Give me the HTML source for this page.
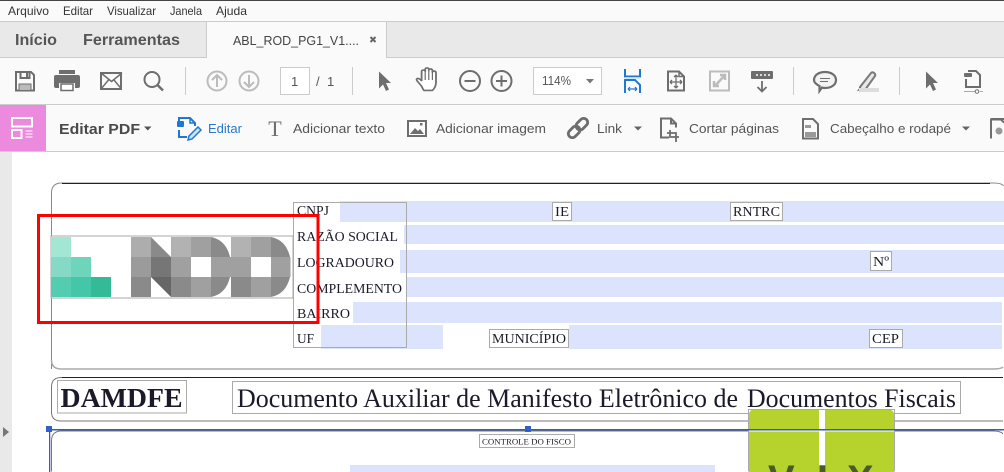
<!DOCTYPE html>
<html><head><meta charset="utf-8"><style>
html,body{margin:0;padding:0;background:#fff;width:1004px;height:472px;overflow:hidden}
body{position:relative}
svg{display:block}
.u{font-family:"Liberation Sans",sans-serif;fill:#555}
.s{font-family:"Liberation Serif",serif;fill:#1a1a2a;font-size:14px}
.i{fill:none;stroke:#6e6e6e;stroke-width:2}
#gl{position:absolute;left:749px;top:465px;width:145px;height:7px;overflow:hidden;font:bold 40px/40px "Liberation Sans",sans-serif;color:#4a5a28}
#gl span{position:absolute;top:-5px;height:12px;width:30px;overflow:hidden;display:block}
</style></head><body>
<svg width="1004" height="472" viewBox="0 0 1004 472" xmlns="http://www.w3.org/2000/svg">
<rect width="1004" height="472" fill="#fff"/>
<!-- chrome -->
<rect width="1004" height="152" fill="#fafafa"/>
<rect width="1004" height="1" fill="#444"/>
<rect y="21" width="1004" height="1" fill="#ccc"/>
<rect y="22" width="1004" height="35" fill="#e9e9e9"/>
<rect y="57" width="1004" height="1" fill="#ccc"/>
<rect x="207" y="22" width="179" height="36" fill="#fafafa"/>
<rect x="206" y="22" width="1" height="36" fill="#ccc"/>
<rect x="386" y="22" width="1" height="36" fill="#ccc"/>
<rect y="104" width="1004" height="1" fill="#ccc"/>
<rect y="151" width="1004" height="1" fill="#ccc"/>
<rect y="105" width="46" height="46" fill="#ec8bdd"/>
<!-- menu -->
<g class="u" font-size="12" style="fill:#333">
<text x="8" y="15" textLength="41" lengthAdjust="spacingAndGlyphs">Arquivo</text>
<text x="63" y="15" textLength="30" lengthAdjust="spacingAndGlyphs">Editar</text>
<text x="107" y="15" textLength="49" lengthAdjust="spacingAndGlyphs">Visualizar</text>
<text x="170" y="15" textLength="32" lengthAdjust="spacingAndGlyphs">Janela</text>
<text x="216" y="15" textLength="31" lengthAdjust="spacingAndGlyphs">Ajuda</text>
</g>
<g class="u" font-size="15.500" font-weight="bold">
<text x="15" y="45" textLength="42" lengthAdjust="spacingAndGlyphs">Início</text>
<text x="83" y="45" textLength="97" lengthAdjust="spacingAndGlyphs">Ferramentas</text>
</g>
<text class="u" x="233" y="45" font-size="13" style="fill:#444" textLength="126" lengthAdjust="spacingAndGlyphs">ABL_ROD_PG1_V1....</text>
<path d="M370.500 37l5 5m0-5l-5 5" stroke="#666" stroke-width="2" fill="none"/>
<!-- toolbar left -->
<path class="i" d="M16 72h15l3 3v15.500h-18zM20.500 72v6h9v-6"/>
<rect x="26" y="73" width="2" height="4" fill="#6e6e6e"/>
<rect x="19" y="84" width="12" height="6.500" fill="#bbb" stroke="#6e6e6e" stroke-width="1"/>
<path d="M59 70h16v4h-16zM56 75h22a2 2 0 0 1 2 2v9a2 2 0 0 1-2 2h-3v-5h-16v5h-3a2 2 0 0 1-2-2v-9a2 2 0 0 1 2-2z" fill="#6e6e6e"/>
<rect x="61" y="84" width="12" height="6.500" fill="#fff" stroke="#6e6e6e" stroke-width="1.500"/>
<rect x="101" y="73" width="20" height="16" class="i"/>
<path d="M101 73l10.500 8.500 10.500-8.500M101 89l7.500-9M121.500 89l-7.500-9" fill="none" stroke="#6e6e6e" stroke-width="1.500"/>
<circle cx="152" cy="79.500" r="7.500" class="i"/>
<path d="M157.500 85l5.500 5.500" stroke="#6e6e6e" stroke-width="2.500" fill="none"/>
<rect x="185" y="67" width="1" height="28" fill="#ccc"/>
<g fill="none" stroke="#bcbcbc" stroke-width="2">
<circle cx="217" cy="81" r="9.500"/><path d="M217 87v-11.500M212 80l5-5 5 5"/>
<circle cx="249" cy="81" r="9.500"/><path d="M249 75v11.500M244 82l5 5 5-5"/>
</g>
<rect x="280.500" y="67.500" width="29" height="27" fill="#fff" stroke="#ccc"/>
<text class="u" x="291" y="86" font-size="13" style="fill:#555">1</text>
<text class="u" x="316" y="86" font-size="13" style="fill:#555">/</text>
<text class="u" x="327" y="86" font-size="13" style="fill:#555">1</text>
<rect x="352" y="67" width="1" height="28" fill="#ccc"/>
<path d="M379 71.500l12 11.500h-5l3 6.500-3 1.500-3-6.500-4 4z" fill="#6e6e6e"/>
<!-- hand -->
<g transform="translate(427 81) scale(1.2 1.05) translate(-425.500 -81)">
<path d="M421 86c-2-3-5-6-4-7 1-1 3 0 4 2v-9c0-2 3-2 3 0v-2c0-2 3-2 3 0v1c0-2 3-2 3 0v2c0-2 3-2 3 0v9c0 4-1 6-3 8h-7c-1-1-1-2-2-4z" fill="#fff" stroke="#6e6e6e" stroke-width="1.500"/>
<path d="M424 72v8M427 71v9M430 72v8" stroke="#6e6e6e" stroke-width="1" fill="none"/>
</g>
<circle cx="470" cy="81" r="10" class="i"/><path d="M464.500 81h11" stroke="#6e6e6e" stroke-width="2"/>
<circle cx="501.500" cy="81" r="10" class="i"/><path d="M496 81h11M501.500 75.500v11" stroke="#6e6e6e" stroke-width="2"/>
<rect x="533.500" y="67.500" width="68" height="27" fill="#fff" stroke="#ccc"/>
<text class="u" x="542" y="85" font-size="12.500" style="fill:#555" textLength="29" lengthAdjust="spacingAndGlyphs">114%</text>
<path d="M586 79h8l-4 4.500z" fill="#777"/>
<!-- fit width blue -->
<path d="M625 69v7.500h15v-7.500" fill="none" stroke="#1f78d1" stroke-width="2"/>
<rect x="625" y="77" width="15" height="1.500" fill="#b7d4f0"/>
<path d="M625 93v-13h10l5 5v8" fill="none" stroke="#1f78d1" stroke-width="2"/>
<path d="M628 89h9M628 89l2-2m-2 2l2 2M637 89l-2-2m2 2l-2 2" stroke="#1f78d1" stroke-width="1.200" fill="none"/>
<path class="i" d="M668 71.500h11l5 5v14h-16z"/><path d="M679 71.500v5h5" fill="none" stroke="#6e6e6e" stroke-width="1.500"/>
<path d="M676 75v13M670 82h12M676 75l-2 2m2-2l2 2M676 88l-2-2m2 2l2-2M670 82l2-2m-2 2l2 2M682 82l-2-2m2 2l-2 2" stroke="#6e6e6e" stroke-width="1.300" fill="none"/>
<rect x="710" y="71.500" width="19" height="19" fill="none" stroke="#bcbcbc" stroke-width="2"/>
<path d="M715 86l9-10M720 75h5v5M714 81v5h5" stroke="#bcbcbc" stroke-width="2.500" fill="none"/>
<rect x="751" y="71" width="22" height="8" rx="1" fill="#6e6e6e"/>
<path d="M756 75h2M760 75h2M764 75h2M768 75h2" stroke="#fff" stroke-width="1.500"/>
<path d="M762 81v10M757.500 87l4.500 4.500 4.500-4.500" stroke="#6e6e6e" stroke-width="1.800" fill="none"/>
<rect x="793" y="67" width="1" height="28" fill="#ccc"/>
<path d="M825 72c6 0 11 3 11 8s-5 8-11 8c-1 0-2 0-3-.5l-2.500 3.500v-5c-3-1.500-5.500-3.500-5.500-6 0-5 5-8 11-8z" fill="#f3f3f3" stroke="#6e6e6e" stroke-width="2.200"/>
<path d="M820 78.500h10M820 81.500h8" stroke="#6e6e6e" stroke-width="1"/>
<path d="M860 87l11-14c2-2 5 1 4 3l-10 14-5 1z" fill="#e8e8e8" stroke="#7a7a7a" stroke-width="2"/><path d="M857 91l3-4 4 3z" fill="#6e6e6e"/>
<rect x="859" y="88" width="20" height="4" fill="#ddd"/>
<rect x="899" y="67" width="1" height="28" fill="#ccc"/>
<path d="M926 71.500l12 11.500h-5l3 6.500-3 1.500-3-6.500-4 4z" fill="#6e6e6e"/>
<path class="i" d="M968 71h8l4 4v12h-14v-8" stroke-width="1.800"/><rect x="964" y="73" width="8" height="4" rx="1" fill="#6e6e6e"/>
<path d="M964 91.500h12M980 91.500h3" stroke="#aaa" stroke-width="1"/><circle cx="977" cy="91.500" r="1.800" fill="#fff" stroke="#6e6e6e"/>
<!-- pink icon -->
<g fill="none" stroke="#fff" stroke-width="2">
<rect x="12" y="118" width="20" height="8.500"/><rect x="12" y="130" width="9.500" height="8"/>
</g>
<path d="M25.500 131h7M25.500 134h7M25.500 137h7" stroke="#fff" stroke-width="1"/>
<!-- editar bar -->
<text class="u" x="59" y="134" font-size="14.500" font-weight="bold" style="fill:#4a4a4a" textLength="81" lengthAdjust="spacingAndGlyphs">Editar PDF</text>
<path d="M144 126.500h7.500l-3.750 4z" fill="#555"/>
<path d="M179 122v-4h11l5 5v3M179 130v7h8" fill="none" stroke="#1f78d1" stroke-width="2"/>
<rect x="177" y="121" width="7" height="6" rx="1" fill="#1f78d1"/>
<path d="M190 118v5h5" fill="none" stroke="#1f78d1" stroke-width="1.500"/>
<path d="M188 140l1-4 9-9 3 3-9 9z" fill="#cfe3f6" stroke="#1f78d1" stroke-width="1.500"/>
<text class="u" x="208" y="133" font-size="12.500" style="fill:#2a78cc" textLength="34" lengthAdjust="spacingAndGlyphs">Editar</text>
<text x="275" y="136" font-family="Liberation Serif,serif" font-size="22" fill="#6e6e6e" text-anchor="middle">T</text>
<text class="u" x="293" y="133" font-size="12.500" textLength="92" lengthAdjust="spacingAndGlyphs">Adicionar texto</text>
<rect x="408" y="121" width="18" height="15" fill="#fff" stroke="#6e6e6e" stroke-width="2"/>
<path d="M410 134l5-6 3 3 2-2 4 5z" fill="#6e6e6e"/><rect x="420" y="123" width="2.500" height="2.500" fill="#6e6e6e"/>
<text class="u" x="436" y="133" font-size="12.500" textLength="110" lengthAdjust="spacingAndGlyphs">Adicionar imagem</text>
<g fill="none" stroke="#6e6e6e" stroke-width="2.800" transform="rotate(-45 578 128)">
<rect x="566" y="124" width="13" height="8" rx="4"/><rect x="577" y="124" width="13" height="8" rx="4"/>
</g>
<text class="u" x="597" y="133" font-size="12.500" textLength="25" lengthAdjust="spacingAndGlyphs">Link</text>
<path d="M634 126.500h8l-4 4z" fill="#666"/>
<path class="i" d="M669 137.500h-8v-19h10l5 5v4M671 118.500v5h5" stroke-width="1.800"/>
<path d="M670 130v7h9M667 133h9v9" fill="none" stroke="#6e6e6e" stroke-width="1.800"/>
<text class="u" x="689" y="133" font-size="12.500" textLength="90" lengthAdjust="spacingAndGlyphs">Cortar páginas</text>
<path class="i" d="M803 119h10l5 5v14.500h-15z"/><rect x="805" y="125" width="6" height="3" fill="#999"/><rect x="805" y="132" width="11" height="5" fill="#999"/>
<text class="u" x="830" y="133" font-size="12.500" textLength="121" lengthAdjust="spacingAndGlyphs">Cabeçalho e rodapé</text>
<path d="M962 126.500h8l-4 4z" fill="#666"/>
<path class="i" d="M991 138.500v-19h10l3 3"/><circle cx="999" cy="131" r="3.500" fill="#999"/>
<rect x="991" y="118" width="13" height="2" fill="#6e6e6e"/>
<!-- document area -->
<rect y="152" width="12" height="320" fill="#e9e9e9"/>
<path d="M3 427l6 5-6 5z" fill="#777"/>
<!-- box 1 -->
<path d="M51.500 369V193q0-10 10-10H993q9 0 10.500 3" fill="none" stroke="#888"/>
<path d="M62 183.500H990" stroke="#222" stroke-width="1"/>
<path d="M51.500 360q0 9 10 9H993q8 0 10-2" fill="none" stroke="#aaa" stroke-width="1.500"/>
<!-- fields -->
<g fill="#dbe3fd">
<rect x="340" y="201" width="664" height="21"/>
<rect x="404" y="225" width="600" height="19"/>
<rect x="400" y="250" width="604" height="23"/>
<rect x="406" y="277" width="598" height="20"/>
<rect x="353" y="302" width="649" height="21"/>
<rect x="321" y="325" width="122" height="24"/>
<rect x="569" y="325" width="433" height="24"/>
<rect x="350" y="465" width="365" height="7"/>
</g>
<g fill="#fff" stroke="#aaa">
<rect x="552.500" y="202.500" width="19" height="18"/>
<rect x="730.500" y="202.500" width="52" height="18"/>
<rect x="870.500" y="251.500" width="21" height="19"/>
<rect x="489.500" y="329.500" width="79" height="18"/>
<rect x="869.500" y="329.500" width="33" height="18"/>
</g>
<rect x="293.500" y="202.500" width="113" height="145" fill="none" stroke="#aaa"/>
<g class="s">
<text x="297" y="215" textLength="32" lengthAdjust="spacingAndGlyphs">CNPJ</text>
<text x="297" y="241" textLength="101" lengthAdjust="spacingAndGlyphs">RAZÃO SOCIAL</text>
<text x="297" y="267" textLength="97" lengthAdjust="spacingAndGlyphs">LOGRADOURO</text>
<text x="297" y="293" textLength="105" lengthAdjust="spacingAndGlyphs">COMPLEMENTO</text>
<text x="297" y="318" textLength="53" lengthAdjust="spacingAndGlyphs">BAIRRO</text>
<text x="297" y="343" textLength="17" lengthAdjust="spacingAndGlyphs">UF</text>
<text x="555" y="216" textLength="14" lengthAdjust="spacingAndGlyphs">IE</text>
<text x="733" y="216" textLength="47" lengthAdjust="spacingAndGlyphs">RNTRC</text>
<text x="873" y="266" textLength="16" lengthAdjust="spacingAndGlyphs">Nº</text>
<text x="492" y="343" textLength="74" lengthAdjust="spacingAndGlyphs">MUNICÍPIO</text>
<text x="872" y="343" textLength="27" lengthAdjust="spacingAndGlyphs">CEP</text>
</g>
<!-- logo -->
<rect x="51" y="236" width="242" height="62" fill="#fff" stroke="#aaa"/>
<g shape-rendering="crispEdges">
<rect x="51" y="237" width="20" height="20" fill="#a2e6d3"/>
<rect x="51" y="257" width="20" height="20" fill="#86d9c4"/><rect x="71" y="257" width="20" height="20" fill="#6fd4bc"/>
<rect x="51" y="277" width="20" height="20" fill="#54ccb0"/><rect x="71" y="277" width="20" height="20" fill="#44c6a8"/><rect x="91" y="277" width="20" height="20" fill="#33ba96"/>
<rect x="131" y="237" width="20" height="20" fill="#adadad"/><rect x="131" y="257" width="20" height="20" fill="#9b9b9b"/><rect x="131" y="277" width="20" height="20" fill="#8a8a8a"/>
<rect x="151" y="257" width="20" height="20" fill="#767676"/>
<rect x="171" y="237" width="20" height="20" fill="#b2b2b2"/><rect x="171" y="257" width="20" height="20" fill="#a0a0a0"/><rect x="171" y="277" width="20" height="20" fill="#8a8a8a"/>
<rect x="191" y="237" width="20" height="20" fill="#a0a0a0"/><rect x="191" y="277" width="20" height="20" fill="#a0a0a0"/>
<rect x="231" y="237" width="20" height="20" fill="#b2b2b2"/><rect x="231" y="257" width="20" height="20" fill="#a0a0a0"/><rect x="231" y="277" width="20" height="20" fill="#8a8a8a"/>
<rect x="251" y="237" width="20" height="20" fill="#a0a0a0"/><rect x="251" y="277" width="20" height="20" fill="#a0a0a0"/>
</g>
<path d="M151 237l20 20h-20z" fill="#8a8a8a"/>
<path d="M151 277h20v20z" fill="#666"/>
<path d="M211 237q15 3 19 20h-19z" fill="#8a8a8a"/><rect x="211" y="257" width="20" height="20" fill="#a0a0a0"/><path d="M211 297q15-3 19-20h-19z" fill="#8a8a8a"/>
<path d="M271 237q15 3 19 20h-19z" fill="#8a8a8a"/><rect x="271" y="257" width="19.500" height="20" fill="#a0a0a0"/><path d="M271 297q15-3 19-20h-19z" fill="#8a8a8a"/>
<!-- red rectangle -->
<rect x="38.500" y="215.500" width="279.500" height="107" fill="none" stroke="#f00" stroke-width="3"/>
<!-- box 2 -->
<path d="M1003 421H61q-9.500 0-9.500-9V387q0-9.500 9.500-9.500H1003" fill="none" stroke="#777"/>
<path d="M62 377.500H1003" stroke="#222"/>
<rect x="57.500" y="380.500" width="129" height="32.500" fill="#fff" stroke="#aaa"/>
<text x="60.500" y="407" font-family="Liberation Serif,serif" font-weight="bold" font-size="27" fill="#1a1a2a" textLength="122" lengthAdjust="spacingAndGlyphs">DAMDFE</text>
<rect x="232.500" y="381.500" width="728" height="32" fill="#fff" stroke="#aaa"/>
<text x="237" y="407" font-family="Liberation Serif,serif" font-size="26" fill="#1a1a2a" textLength="501" lengthAdjust="spacingAndGlyphs">Documento Auxiliar de Manifesto Eletrônico de</text>
<text x="747" y="407" font-family="Liberation Serif,serif" font-size="26" fill="#1a1a2a" textLength="209" lengthAdjust="spacingAndGlyphs">Documentos Fiscais</text>
<!-- box 3 -->
<path d="M51.500 471.500V441q0-10 10-10H993q8 0 10 3" fill="none" stroke="#777"/>
<rect x="479.500" y="434.500" width="95" height="13" fill="#fff" stroke="#aaa"/>
<text x="482" y="444.500" font-family="Liberation Serif,serif" font-size="8.500" fill="#1a1a2a" textLength="89" lengthAdjust="spacingAndGlyphs">CONTROLE DO FISCO</text>
<!-- green image -->
<path d="M749 472V415q0-5.500 6-5.500H888q6 0 6 5.500V472z" fill="#b5d22d"/>
<rect x="819" y="409" width="6" height="56" fill="#fff"/>
<path d="M748.500 471.500V409.500H894.500V471.500" fill="none" stroke="#aaa"/>
<!-- selection -->
<rect x="50" y="429" width="954" height="1.500" fill="#3a5bb0"/>
<rect x="749" y="430.500" width="145" height="1" fill="#fff"/>
<rect x="49" y="430" width="1.300" height="42" fill="#3a5bb0"/>
<rect x="46" y="426" width="6" height="6" fill="#3060c8"/>
<rect x="525" y="426" width="6" height="6" fill="#3060c8"/>
</svg>
<div id="gl"><span style="left:19px">V</span><span style="left:68px">I</span><span style="left:98px">X</span></div>
</body></html>
